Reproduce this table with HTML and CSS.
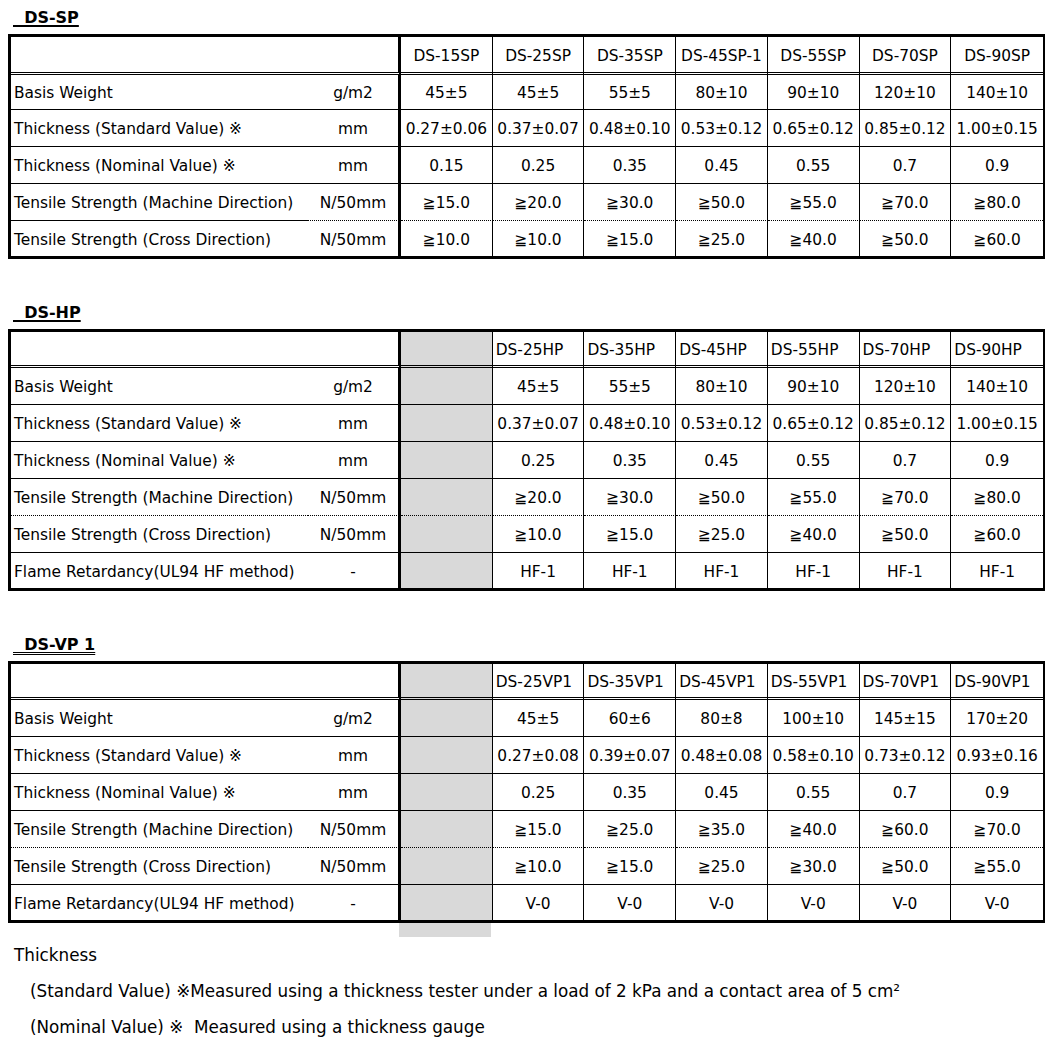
FILE: index.html
```html
<!DOCTYPE html>
<html lang="en">
<head>
<meta charset="utf-8">
<title>DS series specifications</title>
<link rel="stylesheet" href="styles.css">
</head>
<body>
<section class="sec">
  <h2 class="ttl"><span>&nbsp;&nbsp;DS-SP</span></h2>
  <div class="sheet sp">
    <div class="row hd"><div class="c lbl"></div><div class="c unit"></div><div class="c d">DS-15SP</div><div class="c d">DS-25SP</div><div class="c d">DS-35SP</div><div class="c d">DS-45SP-1</div><div class="c d">DS-55SP</div><div class="c d">DS-70SP</div><div class="c d">DS-90SP</div></div>
    <div class="row"><div class="c lbl">Basis Weight</div><div class="c unit">g/m2</div><div class="c d">45±5</div><div class="c d">45±5</div><div class="c d">55±5</div><div class="c d">80±10</div><div class="c d">90±10</div><div class="c d">120±10</div><div class="c d">140±10</div></div>
    <div class="row"><div class="c lbl">Thickness (Standard Value) ※</div><div class="c unit">mm</div><div class="c d">0.27±0.06</div><div class="c d">0.37±0.07</div><div class="c d">0.48±0.10</div><div class="c d">0.53±0.12</div><div class="c d">0.65±0.12</div><div class="c d">0.85±0.12</div><div class="c d">1.00±0.15</div></div>
    <div class="row"><div class="c lbl">Thickness (Nominal Value) ※</div><div class="c unit">mm</div><div class="c d">0.15</div><div class="c d">0.25</div><div class="c d">0.35</div><div class="c d">0.45</div><div class="c d">0.55</div><div class="c d">0.7</div><div class="c d">0.9</div></div>
    <div class="row dot"><div class="c lbl">Tensile Strength (Machine Direction)</div><div class="c unit">N/50mm</div><div class="c d">≧15.0</div><div class="c d">≧20.0</div><div class="c d">≧30.0</div><div class="c d">≧50.0</div><div class="c d">≧55.0</div><div class="c d">≧70.0</div><div class="c d">≧80.0</div></div>
    <div class="row"><div class="c lbl">Tensile Strength (Cross Direction)</div><div class="c unit">N/50mm</div><div class="c d">≧10.0</div><div class="c d">≧10.0</div><div class="c d">≧15.0</div><div class="c d">≧25.0</div><div class="c d">≧40.0</div><div class="c d">≧50.0</div><div class="c d">≧60.0</div></div>
  </div>
</section>

<section class="sec">
  <h2 class="ttl"><span>&nbsp;&nbsp;DS-HP</span></h2>
  <div class="sheet">
    <div class="row hd"><div class="c lbl"></div><div class="c unit"></div><div class="c d gray"></div><div class="c d left">DS-25HP</div><div class="c d left">DS-35HP</div><div class="c d left">DS-45HP</div><div class="c d left">DS-55HP</div><div class="c d left">DS-70HP</div><div class="c d left">DS-90HP</div></div>
    <div class="row"><div class="c lbl">Basis Weight</div><div class="c unit">g/m2</div><div class="c d gray"></div><div class="c d">45±5</div><div class="c d">55±5</div><div class="c d">80±10</div><div class="c d">90±10</div><div class="c d">120±10</div><div class="c d">140±10</div></div>
    <div class="row"><div class="c lbl">Thickness (Standard Value) ※</div><div class="c unit">mm</div><div class="c d gray"></div><div class="c d">0.37±0.07</div><div class="c d">0.48±0.10</div><div class="c d">0.53±0.12</div><div class="c d">0.65±0.12</div><div class="c d">0.85±0.12</div><div class="c d">1.00±0.15</div></div>
    <div class="row"><div class="c lbl">Thickness (Nominal Value) ※</div><div class="c unit">mm</div><div class="c d gray"></div><div class="c d">0.25</div><div class="c d">0.35</div><div class="c d">0.45</div><div class="c d">0.55</div><div class="c d">0.7</div><div class="c d">0.9</div></div>
    <div class="row dot"><div class="c lbl">Tensile Strength (Machine Direction)</div><div class="c unit">N/50mm</div><div class="c d gray"></div><div class="c d">≧20.0</div><div class="c d">≧30.0</div><div class="c d">≧50.0</div><div class="c d">≧55.0</div><div class="c d">≧70.0</div><div class="c d">≧80.0</div></div>
    <div class="row"><div class="c lbl">Tensile Strength (Cross Direction)</div><div class="c unit">N/50mm</div><div class="c d gray"></div><div class="c d">≧10.0</div><div class="c d">≧15.0</div><div class="c d">≧25.0</div><div class="c d">≧40.0</div><div class="c d">≧50.0</div><div class="c d">≧60.0</div></div>
    <div class="row"><div class="c lbl">Flame Retardancy(UL94 HF method)</div><div class="c unit">-</div><div class="c d gray"></div><div class="c d">HF-1</div><div class="c d">HF-1</div><div class="c d">HF-1</div><div class="c d">HF-1</div><div class="c d">HF-1</div><div class="c d">HF-1</div></div>
  </div>
</section>

<section class="sec">
  <h2 class="ttl dbl"><span>&nbsp;&nbsp;DS-VP 1</span></h2>
  <div class="sheet">
    <div class="row hd"><div class="c lbl"></div><div class="c unit"></div><div class="c d gray"></div><div class="c d left">DS-25VP1</div><div class="c d left">DS-35VP1</div><div class="c d left">DS-45VP1</div><div class="c d left">DS-55VP1</div><div class="c d left">DS-70VP1</div><div class="c d left">DS-90VP1</div></div>
    <div class="row"><div class="c lbl">Basis Weight</div><div class="c unit">g/m2</div><div class="c d gray"></div><div class="c d">45±5</div><div class="c d">60±6</div><div class="c d">80±8</div><div class="c d">100±10</div><div class="c d">145±15</div><div class="c d">170±20</div></div>
    <div class="row"><div class="c lbl">Thickness (Standard Value) ※</div><div class="c unit">mm</div><div class="c d gray"></div><div class="c d">0.27±0.08</div><div class="c d">0.39±0.07</div><div class="c d">0.48±0.08</div><div class="c d">0.58±0.10</div><div class="c d">0.73±0.12</div><div class="c d">0.93±0.16</div></div>
    <div class="row"><div class="c lbl">Thickness (Nominal Value) ※</div><div class="c unit">mm</div><div class="c d gray"></div><div class="c d">0.25</div><div class="c d">0.35</div><div class="c d">0.45</div><div class="c d">0.55</div><div class="c d">0.7</div><div class="c d">0.9</div></div>
    <div class="row dot"><div class="c lbl">Tensile Strength (Machine Direction)</div><div class="c unit">N/50mm</div><div class="c d gray"></div><div class="c d">≧15.0</div><div class="c d">≧25.0</div><div class="c d">≧35.0</div><div class="c d">≧40.0</div><div class="c d">≧60.0</div><div class="c d">≧70.0</div></div>
    <div class="row"><div class="c lbl">Tensile Strength (Cross Direction)</div><div class="c unit">N/50mm</div><div class="c d gray"></div><div class="c d">≧10.0</div><div class="c d">≧15.0</div><div class="c d">≧25.0</div><div class="c d">≧30.0</div><div class="c d">≧50.0</div><div class="c d">≧55.0</div></div>
    <div class="row"><div class="c lbl">Flame Retardancy(UL94 HF method)</div><div class="c unit">-</div><div class="c d gray"></div><div class="c d">V-0</div><div class="c d">V-0</div><div class="c d">V-0</div><div class="c d">V-0</div><div class="c d">V-0</div><div class="c d">V-0</div></div>
  </div>
  <div class="tail"></div>
</section>

<div class="notes">
  <p class="note">Thickness</p>
  <p class="note sub">(Standard Value) ※Measured using a thickness tester under a load of 2 kPa and a contact area of 5 cm²</p>
  <p class="note sub">(Nominal Value) ※&nbsp; Measured using a thickness gauge</p>
</div>
</body>
</html>
```
FILE: styles.css
```css
body {
  margin: 8px;
  background: #fff;
  color: #000;
  font-family: "DejaVu Sans", "Noto Sans CJK JP", sans-serif;
  font-size: 15.4px;
}

.sec + .sec {
  margin-top: 44px;
}

.ttl {
  margin: 0 0 0 5px;
  height: 26px;
  font-size: 16px;
  font-weight: bold;
  line-height: 20px;
}

.ttl span {
  text-decoration: underline;
  text-decoration-thickness: 2px;
  text-underline-offset: 2px;
}

.ttl.dbl span {
  text-decoration-style: double;
  text-decoration-thickness: 1px;
}

.sheet {
  width: 1038px;
  box-sizing: border-box;
  border: 3px solid #000;
  display: grid;
  grid-template-columns: 297px 93px repeat(7, 1fr);
}

.row {
  display: contents;
}

.c {
  box-sizing: border-box;
  height: 37px;
  padding-top: 2px;
  display: flex;
  align-items: center;
  justify-content: center;
  white-space: nowrap;
  border-right: 1px solid #000;
  border-bottom: 1px solid #000;
}

.c:last-child {
  border-right: 0;
}

.lbl {
  justify-content: flex-start;
  padding-left: 3px;
  border-right: 0;
}

.unit {
  border-right: 3px solid #000;
}

.left {
  justify-content: flex-start;
  padding-left: 3px;
}

.gray {
  background: #d9d9d9;
}

.hd .c {
  height: 36px;
  border-bottom: 3px double #000;
}

.sp .hd .c {
  height: 38px;
}

.sp .hd + .row .c {
  height: 35px;
}

.dot .c {
  border-bottom-style: dotted;
}

.sp .dot .lbl {
  border-bottom-style: solid;
}

.row:last-child .c {
  height: 35px;
  border-bottom: 0;
}

.tail {
  margin-left: 391px;
  width: 92px;
  height: 14px;
  background: #d9d9d9;
}

.notes {
  padding-left: 6px;
  font-size: 16.8px;
}

.note {
  margin: 0;
  line-height: 36px;
  white-space: nowrap;
}

.note.sub {
  padding-left: 16px;
}
```
